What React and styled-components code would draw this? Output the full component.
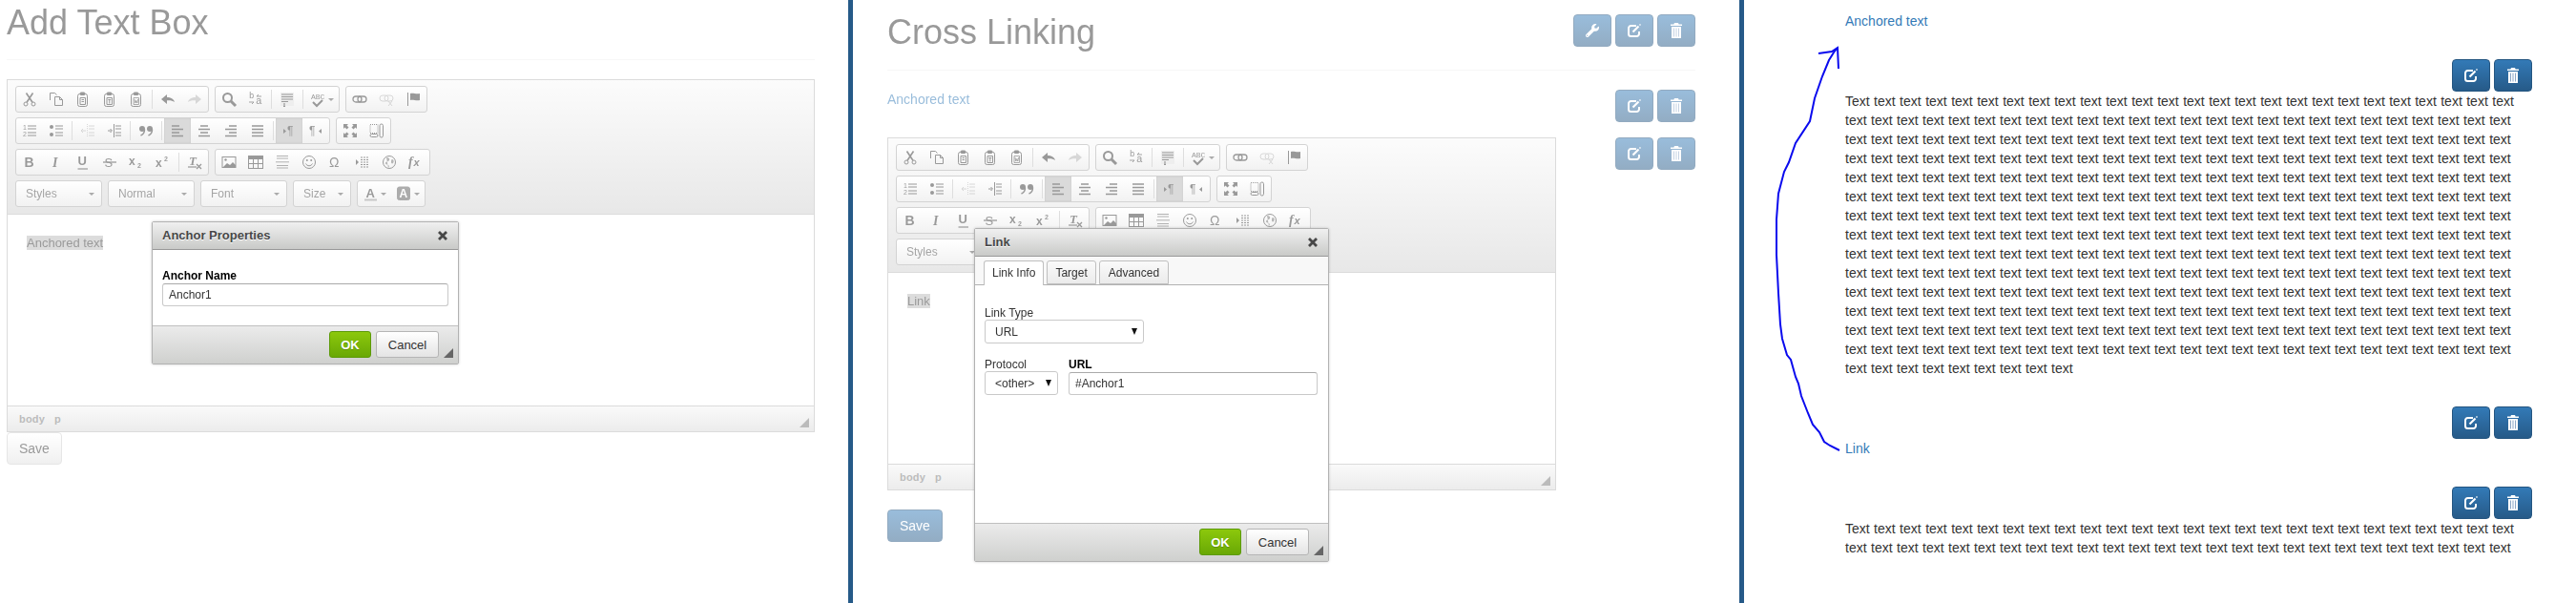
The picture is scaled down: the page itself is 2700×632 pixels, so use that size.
import React from "react";
import styled, { createGlobalStyle } from "styled-components";
import { FaWrench } from "react-icons/fa";

const GlobalStyle = createGlobalStyle`
  html, body { margin: 0; padding: 0; background: #fff; }
  body { font-family: "Liberation Sans", Arial, sans-serif; font-size: 14px; line-height: 20px; color: #333; }
  * { box-sizing: border-box; }
`;

/* page frame */
const Page = styled.div`
  display: flex;
  width: 2700px;
  height: 632px;
  overflow: hidden;
`;
const Panel = styled.section`
  position: relative;
  flex: ${(p) => (p.$width ? `0 0 ${p.$width}px` : "1")};
  padding-left: ${(p) => p.$left}px;
  padding-top: ${(p) => p.$top || 0}px;
`;
const Divider = styled.div`
  flex: 0 0 5px;
  background: #265a88;
`;
const Faded = styled.div`
  opacity: 0.5;
  width: 847px;
`;
const Header = styled.header`
  display: flex;
  justify-content: space-between;
  align-items: flex-start;
  height: ${(p) => p.$height}px;
  padding-top: ${(p) => p.$top}px;
  border-bottom: 1px solid #eee;
  margin-bottom: 20px;
`;
const Title = styled.h1`
  margin: 0;
  font-size: 36px;
  font-weight: 400;
  line-height: 39.6px;
  color: #333;
`;
const Actions = styled.div`
  display: flex;
  justify-content: flex-end;
  gap: 4px;
  margin-top: ${(p) => p.$top || 0}px;
`;
const ActionBtn = styled.button`
  display: flex;
  align-items: center;
  justify-content: center;
  width: 40px;
  height: 34px;
  padding: 0;
  border: 1px solid #245580;
  border-radius: 4px;
  color: #fff;
  background: linear-gradient(#337ab7, #265a88);
`;
const Row = styled.div`
  display: flex;
  justify-content: space-between;
  align-items: flex-start;
  margin-bottom: 16px;
`;
const LinkText = styled.a`
  display: block;
  color: #337ab7;
  line-height: 20px;
`;
const SaveBtn = styled.button`
  display: block;
  height: 34px;
  min-width: 57px;
  margin-top: ${(p) => p.$top || 0}px;
  padding: 0 12px;
  font: inherit;
  border-radius: 4px;
  border: 1px solid ${(p) => (p.$primary ? "#245580" : "#ccc")};
  color: ${(p) => (p.$primary ? "#fff" : "#333")};
  background: ${(p) => (p.$primary ? "linear-gradient(#337ab7, #265a88)" : "linear-gradient(#fff, #e0e0e0)")};
`;

/* CKEditor frame */
const Editor = styled.div`
  width: ${(p) => p.$width}px;
  border: 1px solid #b6b6b6;
`;
const Toolbar = styled.div`
  display: flex;
  flex-direction: column;
  gap: 5px;
  padding: 6px 8px 7px;
  background: linear-gradient(#f8f8f8, #d0d0d0);
  border-bottom: 1px solid #b6b6b6;
`;
const TbRow = styled.div`
  display: flex;
  gap: 6px;
`;
const TbGroup = styled.div`
  display: flex;
  height: 28px;
  border: 1px solid #a6a6a6;
  border-radius: 3px;
  background: linear-gradient(#fff, #e4e4e4);
`;
const TbBtn = styled.span`
  display: flex;
  align-items: center;
  justify-content: center;
  gap: 2px;
  width: ${(p) => (p.$wide ? 35 : 28)}px;
  height: 26px;
  color: #333;
  background: ${(p) => (p.$active ? "#b5b5b5" : "transparent")};
  box-shadow: ${(p) => (p.$active ? "inset 0 0 2px #888" : "none")};
`;
const TbSep = styled.span`
  width: 1px;
  height: 20px;
  margin: 3px 2px;
  background: #bcbcbc;
`;
const Caret = styled.i`
  display: block;
  width: 0;
  height: 0;
  border-left: 3px solid transparent;
  border-right: 3px solid transparent;
  border-top: 3px solid #555;
`;
const Combo = styled.span`
  display: flex;
  align-items: center;
  justify-content: space-between;
  width: ${(p) => p.$width}px;
  height: 28px;
  padding: 0 7px 0 10px;
  font-size: 12px;
  color: #484848;
  border: 1px solid #a6a6a6;
  border-radius: 3px;
  background: linear-gradient(#fff, #e4e4e4);
`;
const EditBody = styled.div`
  height: 200px;
  padding: 19px 20px;
  font-size: 13px;
  line-height: 21px;
  color: #333;
  background: #fff;
`;
const Selected = styled.span`
  background: #b8b8b8;
`;
const EditFoot = styled.div`
  position: relative;
  display: flex;
  align-items: center;
  gap: 10px;
  height: 27px;
  padding-left: 12px;
  font-size: 11px;
  font-weight: 700;
  letter-spacing: 0.2px;
  color: #777;
  border-top: 1px solid #b6b6b6;
  background: linear-gradient(#f4f4f4, #d8d8d8);
`;
const Grip = styled.i`
  position: absolute;
  right: ${(p) => p.$right}px;
  bottom: ${(p) => p.$bottom}px;
  width: 10px;
  height: 10px;
  background: ${(p) => p.$color};
  clip-path: polygon(100% 0, 100% 100%, 0 100%);
`;

/* dialogs sit on top of the faded page */
const Dialog = styled.div`
  position: absolute;
  left: ${(p) => p.$left}px;
  top: ${(p) => p.$top}px;
  width: ${(p) => p.$width}px;
  height: ${(p) => p.$height}px;
  display: flex;
  flex-direction: column;
  border: 1px solid #b2b2b2;
  border-radius: 2px;
  background: #fff;
  box-shadow: 0 0 3px rgba(0, 0, 0, 0.2);
`;
const DlgTitle = styled.div`
  display: flex;
  align-items: center;
  justify-content: space-between;
  flex: 0 0 29px;
  padding: 0 10px;
  font-size: 13px;
  font-weight: 700;
  color: #474747;
  text-shadow: 0 1px 0 #fff;
  background: linear-gradient(#f0f0f0, #c9cac8);
  border-bottom: 1px solid #999;
`;
const DlgBody = styled.div`
  flex: 1;
  padding: ${(p) => p.$top}px 10px 0;
  font-size: 12px;
  line-height: 14px;
  color: #333;
`;
const DlgFoot = styled.div`
  position: relative;
  display: flex;
  justify-content: flex-end;
  gap: 5px;
  flex: 0 0 40px;
  padding: 5px 20px 0 0;
  border-top: 1px solid #bfbfbf;
  background: linear-gradient(#ebebeb, #cfd0ce);
`;
const OkBtn = styled.button`
  width: 44px;
  height: 28px;
  padding: 0;
  font: 700 13px "Liberation Sans", Arial, sans-serif;
  color: #fff;
  text-shadow: 0 1px 0 #5f8f0a;
  border: 1px solid #5c9a06;
  border-radius: 3px;
  background: linear-gradient(#8cc80c, #69a805);
`;
const CancelBtn = styled.button`
  width: 66px;
  height: 28px;
  padding: 0;
  font: 400 13px "Liberation Sans", Arial, sans-serif;
  color: #333;
  border: 1px solid #b5b5b5;
  border-radius: 3px;
  background: linear-gradient(#fff, #e4e4e4);
`;
const Label = styled.label`
  display: block;
  height: 14px;
  font-weight: ${(p) => (p.$bold ? 700 : 400)};
  color: ${(p) => (p.$bold ? "#000" : "#333")};
`;
const TextInput = styled.input`
  display: block;
  width: ${(p) => p.$width}px;
  height: 24px;
  margin-top: 1px;
  padding: 0 6px;
  font: 12px "Liberation Sans", Arial, sans-serif;
  color: #333;
  border: 1px solid #c9c9c9;
  border-top-color: #aaa;
  border-radius: 3px;
  outline: none;
  background: #fff;
`;
const SelectBox = styled.div`
  display: flex;
  align-items: center;
  justify-content: space-between;
  width: ${(p) => p.$width}px;
  height: 25px;
  padding: 0 6px 0 10px;
  border: 1px solid #c9c9c9;
  border-radius: 3px;
  background: #fff;
  &::after {
    content: "";
    width: 0;
    height: 0;
    border-left: 3.5px solid transparent;
    border-right: 3.5px solid transparent;
    border-top: 7px solid #111;
  }
`;
const Tabs = styled.div`
  display: flex;
  align-items: flex-end;
  gap: 3px;
  flex: 0 0 30px;
  padding-left: 9px;
  background: #f8f8f8;
  border-bottom: 1px solid #b2b2b2;
`;
const Tab = styled.div`
  height: ${(p) => (p.$active ? 26 : 25)}px;
  margin-bottom: ${(p) => (p.$active ? -1 : 0)}px;
  padding: 0 ${(p) => p.$pad}px;
  font-size: 12px;
  line-height: 24px;
  color: #333;
  border: 1px solid #bfbfbf;
  border-bottom: ${(p) => (p.$active ? "none" : "1px solid #bfbfbf")};
  border-radius: 3px 3px 0 0;
  background: ${(p) => (p.$active ? "#fff" : "linear-gradient(#fafafa, #ebebeb)")};
`;
const FieldRow = styled.div`
  display: flex;
  gap: 11px;
  margin-top: 15px;
`;

/* preview column */
const Preview = styled.div`
  width: 720px;
`;
const Item = styled.div`
  margin-top: 30px;
`;
const Prose = styled.p`
  margin: 0;
  word-spacing: 0.55px;
  color: #333;
`;
const Scribble = styled.svg`
  position: absolute;
  left: 20px;
  top: 40px;
  pointer-events: none;
`;
const GlyphSvg = styled.svg`
  display: block;
  flex: none;
  overflow: visible;
`;

const T = ({ x, y, s = 12, w = 700, i, children, fill = "currentColor", f = "Liberation Sans" }) => (
  <text x={x} y={y} fontSize={s} fontWeight={w} fontStyle={i ? "italic" : "normal"} fontFamily={f} fill={fill} stroke="none">
    {children}
  </text>
);

const clip = (
  <>
    <rect x="2.5" y="2.5" width="10" height="13" rx="2" />
    <rect x="5" y="1" width="5" height="2.5" rx="1" fill="currentColor" />
  </>
);

const icons = {
  cut: (<><circle cx="4" cy="13" r="2" /><circle cx="12" cy="13" r="2" /><path d="M5 11.2 11.5 1.5M11 11.2 4.5 1.5" strokeWidth="1.6" /></>),
  copy: (<><path d="M1.5 9V1.5h5l2 2M6.5 5.5h5l3 3v6h-8z" /><path d="M11.5 5.5v3h3" /></>),
  paste: (<>{clip}<path d="M5 6.5h5.500v7H5zM6.500 8.500h2.500M6.500 10.500h2.500" /></>),
  pasteText: (<>{clip}<path d="M5 6.500h5.500v7H5zM6.300 8.500h3M7.800 8.500v4" /></>),
  pasteWord: (<>{clip}<path d="M5 6.500h5.500v7H5zM6 8l.8 4 1-2.500 1 2.500.8-4" strokeWidth=".8" /></>),
  undo: (<path fill="currentColor" stroke="none" d="M1 8l6-5v3c4 0 7 1.500 8 5-2-1.500-4-2-8-1.800V13z" />),
  redo: (<path fill="currentColor" stroke="none" d="M15 8 9 3v3c-4 0-7 1.500-8 5 2-1.500 4-2 8-1.800V13z" />),
  find: (<><circle cx="6.500" cy="6.500" r="4.500" strokeWidth="2" /><path d="M10 10l5 5" strokeWidth="3" /></>),
  replace: (<><T x="1" y="7" s={9} w={400} f="Liberation Mono">b</T><T x="8" y="13" s={11} w={400} f="Liberation Mono">a</T><path d="M14 5H9l2-2M1 11h5l-2 2" strokeWidth=".9" /></>),
  selectAll: (<><rect x="1" y="1" width="14" height="14" fill="#ddd" stroke="none" /><path d="M2 3h12M2 5.500h12M2 8h12M2 10.500h7M5 12v3M4 15.500h2" strokeWidth="1.200" /></>),
  spell: (<><T x="0" y="8" s={8} w={400} f="Liberation Mono">ABC</T><path d="M2 11l4 4 6-6" strokeWidth="2" /></>),
  link: (<><rect x="1" y="5" width="9" height="6" rx="3" strokeWidth="1.300" /><rect x="6" y="5" width="9" height="6" rx="3" strokeWidth="1.300" /></>),
  unlink: (<><rect x="1" y="4" width="9" height="6" rx="3" /><rect x="6" y="4" width="9" height="6" rx="3" /><path d="M10 10l4 5M14 10l-4 5" /></>),
  flag: (<><path d="M2.500 1v14" /><path fill="currentColor" d="M5 2c3-1 6 1 10 0v7c-4 1-7-1-10 0z" stroke="none" /></>),
  numList: (<><T x="1" y="7" s={7} w={400}>1</T><T x="1" y="14" s={7} w={400}>2</T><path d="M6 3h9M6 6h9M6 10h9M6 13h9" /></>),
  bulList: (<><circle cx="3" cy="4" r="2" fill="currentColor" stroke="none" /><circle cx="3" cy="12" r="2" fill="currentColor" stroke="none" /><path d="M7 3h8M7 6h8M7 10h8M7 13h8" /></>),
  outdent: (<><path d="M7.500 1v14" strokeDasharray="1 1" /><path d="M9 3h6M9 6h6M9 10h6M9 13h6M6 8H1M3 6 1 8l2 2" /></>),
  indent: (<><path d="M7.500 1v14" /><path d="M9 3h6M9 6h6M9 10h6M9 13h6M1 8h4M3.500 6l2 2-2 2" strokeDasharray="2 0" /></>),
  quote: (<><circle cx="4" cy="6" r="3" fill="currentColor" stroke="none" /><path d="M6.500 6.500C6.500 10 5 12 2.500 13" strokeWidth="1.500" /><circle cx="12" cy="6" r="3" fill="currentColor" stroke="none" /><path d="M14.500 6.500c0 3.500-1.500 5.500-4 6.500" strokeWidth="1.500" /></>),
  left: (<path strokeWidth="1.500" d="M2 3h8M2 6.500h12M2 10h8M2 13.500h12" />),
  center: (<path strokeWidth="1.500" d="M4 3h8M2 6.500h12M4 10h8M2 13.500h12" />),
  right: (<path strokeWidth="1.500" d="M6 3h8M2 6.500h12M6 10h8M2 13.500h12" />),
  justify: (<path strokeWidth="1.500" d="M2 3h12M2 6.500h12M2 10h12M2 13.500h12" />),
  ltr: (<><path d="M2 6l3 2.500L2 11z" fill="currentColor" stroke="none" /><T x="6" y="12" s={12} w={400}>¶</T></>),
  rtl: (<><T x="1" y="12" s={12} w={400}>¶</T><path d="M14 6l-3 2.500 3 2.500z" fill="currentColor" stroke="none" /></>),
  maximize: (<path fill="currentColor" stroke="none" d="M1 1h5L4.500 2.500 6.500 4.500 4.500 6.500 2.500 4.500 1 6zM15 1v5l-1.500-1.500-2 2-2-2 2-2L10 1zM1 15v-5l1.500 1.500 2-2 2 2-2 2L6 15zM15 15h-5l1.500-1.500-2-2 2-2 2 2L15 10z" />),
  blocks: (<><path d="M1 1.500h8v9H1z" strokeDasharray="1 1" /><rect x="1" y="11.500" width="8" height="3" rx="1.500" /><rect x="11" y="1" width="3.500" height="14" rx="1.700" /></>),
  image: (<><rect x="1" y="2.500" width="14" height="11" fill="#f4f4f4" /><path d="M2 13l4-4 3 2 3-3 3 3v2z" fill="currentColor" stroke="none" /><circle cx="4.500" cy="5.500" r="1.200" fill="currentColor" stroke="none" /></>),
  table: (<><rect x="0.500" y="1.500" width="15" height="13" /><rect x="0.500" y="1.500" width="15" height="3" fill="currentColor" /><path d="M5.500 4.500v10M10.500 4.500v10M.5 9.500h15" /></>),
  hr: (<path d="M2 1.500h12M2 4h12M2 11.500h12M2 14h12M1 7.800h14" opacity=".75" strokeWidth="1" />),
  smiley: (<><circle cx="8" cy="8" r="6.500" /><circle cx="5.800" cy="6" r="1" fill="currentColor" stroke="none" /><circle cx="10.200" cy="6" r="1" fill="currentColor" stroke="none" /><path d="M4.500 9.500c1.500 3 5.500 3 7 0" /></>),
  omega: (<T x="1" y="12.500" s={14} w={400}>Ω</T>),
  pageBreak: (<><path d="M1 5l3 3-3 3z" fill="currentColor" stroke="none" /><path d="M6 3h9M6 8h9M6 13h9M6 5.500h9M6 10.500h9" strokeDasharray="2 1" /></>),
  globe: (<><circle cx="8" cy="8" r="6.500" /><path d="M5 3c2 0 4 1 3 3S4 7 4 9s3 1 4 3l-1 2M11 5c2 0 2 3 1 4s-2 0-2-1 0-3 1-3z" fill="currentColor" stroke="none" opacity=".7" /></>),
  fx: (<><T x="0" y="12" s={14} w={700} i f="Liberation Serif">f</T><T x="5.500" y="12" s={11} w={700} i>x</T></>),
  bold: (<T x="2.500" y="13" s={14}>B</T>),
  italic: (<T x="4" y="13" s={14} i f="Liberation Serif">I</T>),
  underline: (<><T x="2.500" y="11" s={13}>U</T><path d="M2.500 15h10.500" strokeWidth="1.200" /></>),
  strike: (<><T x="2.500" y="12.500" s={13} w={400}>S</T><path d="M1 8h14" strokeWidth="1.300" /></>),
  sub: (<><T x="0" y="11" s={12}>x</T><T x="9" y="14" s={7}>2</T></>),
  sup: (<><T x="0" y="13" s={12}>x</T><T x="9" y="7" s={7}>2</T></>),
  clear: (<><T x="2" y="11" s={13} i f="Liberation Serif">T</T><path d="M1 13h9" strokeWidth="1.200" /><path d="M10 10l5 5M15 10l-5 5" strokeWidth="1.300" /></>),
  textColor: (<><T x="2.500" y="12" s={13}>A</T><path d="M1 14.500h13" strokeWidth="2" opacity=".5" /></>),
  bgColor: (<><rect x="0.500" y="1" width="13" height="13.500" rx="2" fill="currentColor" opacity=".8" /><T x="2.500" y="12" s={12} fill="#fff">A</T></>),
  close: (<path d="M2 2l8 8M10 2l-8 8" strokeWidth="2.800" />),
};

const Icon = ({ name, size = 16, dim }) => (
  <GlyphSvg
    width={size}
    height={size}
    viewBox={name === "close" ? "0 0 12 12" : "0 0 16 16"}
    fill="none"
    stroke="currentColor"
    opacity={dim ? 0.35 : 1}
  >
    {icons[name]}
  </GlyphSvg>
);

const EditIcon = () => (
  <GlyphSvg width="16" height="16" viewBox="0 0 16 16" fill="none" stroke="currentColor">
    <path d="M13 9v2.500A2.500 2.500 0 0 1 10.500 14h-6A2.500 2.500 0 0 1 2 11.500v-6A2.500 2.500 0 0 1 4.500 3H10" strokeWidth="2" />
    <path d="M6.500 9.500 12.500 3.500" strokeWidth="2.200" />
    <path d="M13.500 1.500l1 1" strokeWidth="1.500" />
  </GlyphSvg>
);

const TrashIcon = () => (
  <GlyphSvg width="14" height="16" viewBox="0 0 14 16" fill="currentColor">
    <path d="M5 0h4l.6 1.500H13V3H1V1.500h3.400z" />
    <path d="M2 4h10v12H2z" />
    <path d="M4.500 5.500v9M7 5.500v9M9.500 5.500v9" stroke="#7d9cc0" strokeWidth=".9" />
  </GlyphSvg>
);

const EditTrash = ({ top }) => (
  <Actions $top={top}>
    <ActionBtn><EditIcon /></ActionBtn>
    <ActionBtn><TrashIcon /></ActionBtn>
  </Actions>
);

const B = ({ n, active, dim, wide }) => (
  <TbBtn $active={active} $wide={wide}>
    <Icon name={n} dim={dim} />
    {wide && <Caret />}
  </TbBtn>
);

const CkToolbar = () => (
  <Toolbar>
    <TbRow>
      <TbGroup>
        <B n="cut" /><B n="copy" /><B n="paste" /><B n="pasteText" /><B n="pasteWord" /><TbSep /><B n="undo" /><B n="redo" dim />
      </TbGroup>
      <TbGroup>
        <B n="find" /><B n="replace" /><TbSep /><B n="selectAll" /><TbSep /><B n="spell" wide />
      </TbGroup>
      <TbGroup>
        <B n="link" /><B n="unlink" dim /><B n="flag" />
      </TbGroup>
    </TbRow>
    <TbRow>
      <TbGroup>
        <B n="numList" /><B n="bulList" /><TbSep /><B n="outdent" dim /><B n="indent" /><TbSep /><B n="quote" /><TbSep />
        <B n="left" active /><B n="center" /><B n="right" /><B n="justify" /><TbSep /><B n="ltr" active /><B n="rtl" />
      </TbGroup>
      <TbGroup>
        <B n="maximize" /><B n="blocks" />
      </TbGroup>
    </TbRow>
    <TbRow>
      <TbGroup>
        <B n="bold" /><B n="italic" /><B n="underline" /><B n="strike" /><B n="sub" /><B n="sup" /><TbSep /><B n="clear" />
      </TbGroup>
      <TbGroup>
        <B n="image" /><B n="table" /><B n="hr" /><B n="smiley" /><B n="omega" /><B n="pageBreak" /><B n="globe" /><B n="fx" />
      </TbGroup>
    </TbRow>
    <TbRow>
      <Combo $width={91}>Styles<Caret /></Combo>
      <Combo $width={91}>Normal<Caret /></Combo>
      <Combo $width={91}>Font<Caret /></Combo>
      <Combo $width={61}>Size<Caret /></Combo>
      <TbGroup>
        <B n="textColor" wide /><B n="bgColor" wide />
      </TbGroup>
    </TbRow>
  </Toolbar>
);

const CkEditor = ({ width, children }) => (
  <Editor $width={width}>
    <CkToolbar />
    <EditBody><Selected>{children}</Selected></EditBody>
    <EditFoot>
      <span>body</span><span>p</span>
      <Grip $right={5} $bottom={4} $color="#777" />
    </EditFoot>
  </Editor>
);

const DialogFooter = () => (
  <DlgFoot>
    <OkBtn>OK</OkBtn>
    <CancelBtn>Cancel</CancelBtn>
    <Grip $right={5} $bottom={6} $color="#666" />
  </DlgFoot>
);

const words = (n) => ["Text", ...Array(n - 1).fill("text")].join(" ");

export default function App() {
  return (
    <Page>
      <GlobalStyle />

      <Panel $width={889} $left={7}>
        <Faded>
          <Header $height={63} $top={4}>
            <Title>Add Text Box</Title>
          </Header>
          <CkEditor width={847}>Anchored text</CkEditor>
          <SaveBtn>Save</SaveBtn>
        </Faded>
        <Dialog $left={159} $top={232} $width={322} $height={150}>
          <DlgTitle>Anchor Properties<Icon name="close" size={12} /></DlgTitle>
          <DlgBody $top={20}>
            <Label $bold>Anchor Name</Label>
            <TextInput $width={300} readOnly value="Anchor1" />
          </DlgBody>
          <DialogFooter />
        </Dialog>
      </Panel>

      <Divider />

      <Panel $width={929} $left={36}>
        <Faded>
          <Header $height={74} $top={14}>
            <Title>Cross Linking</Title>
            <Actions $top={1}>
              <ActionBtn><FaWrench size={14} /></ActionBtn>
              <ActionBtn><EditIcon /></ActionBtn>
              <ActionBtn><TrashIcon /></ActionBtn>
            </Actions>
          </Header>
          <Row>
            <LinkText>Anchored text</LinkText>
            <EditTrash />
          </Row>
          <Row>
            <div>
              <CkEditor width={701}>Link</CkEditor>
              <SaveBtn $primary $top={20}>Save</SaveBtn>
            </div>
            <EditTrash />
          </Row>
        </Faded>
        <Dialog $left={127} $top={239} $width={372} $height={350}>
          <DlgTitle>Link<Icon name="close" size={12} /></DlgTitle>
          <Tabs>
            <Tab $active $pad={8}>Link Info</Tab>
            <Tab $pad={8}>Target</Tab>
            <Tab $pad={9}>Advanced</Tab>
          </Tabs>
          <DlgBody $top={22}>
            <Label>Link Type</Label>
            <SelectBox $width={167}>URL</SelectBox>
            <FieldRow>
              <div>
                <Label>Protocol</Label>
                <SelectBox $width={77}>&lt;other&gt;</SelectBox>
              </div>
              <div>
                <Label $bold>URL</Label>
                <TextInput $width={261} readOnly value="#Anchor1" />
              </div>
            </FieldRow>
          </DlgBody>
          <DialogFooter />
        </Dialog>
      </Panel>

      <Divider />

      <Panel $left={106} $top={12}>
        <Preview>
          <LinkText>Anchored text</LinkText>
          <Item>
            <EditTrash />
            <Prose>{words(373)}</Prose>
          </Item>
          <Item>
            <EditTrash />
            <LinkText>Link</LinkText>
          </Item>
          <Item>
            <EditTrash />
            <Prose>{words(52)}</Prose>
          </Item>
        </Preview>
        <Scribble width="100" height="440" viewBox="0 0 100 440" fill="none" stroke="#0a0aee" strokeWidth="2">
          <path d="M80 432 70 427 64 423 59 413 52 405 47 393 40 375 37 362 34 355 29 337 25 332 20 315 18 300 16 267 14 227 14 190 16 163 22 140 27 130 34 110 49 87 54 63 62 40 69 23 74 15 78 10" />
          <path d="M58 16 72 14 78 10 79 32" />
        </Scribble>
      </Panel>
    </Page>
  );
}
